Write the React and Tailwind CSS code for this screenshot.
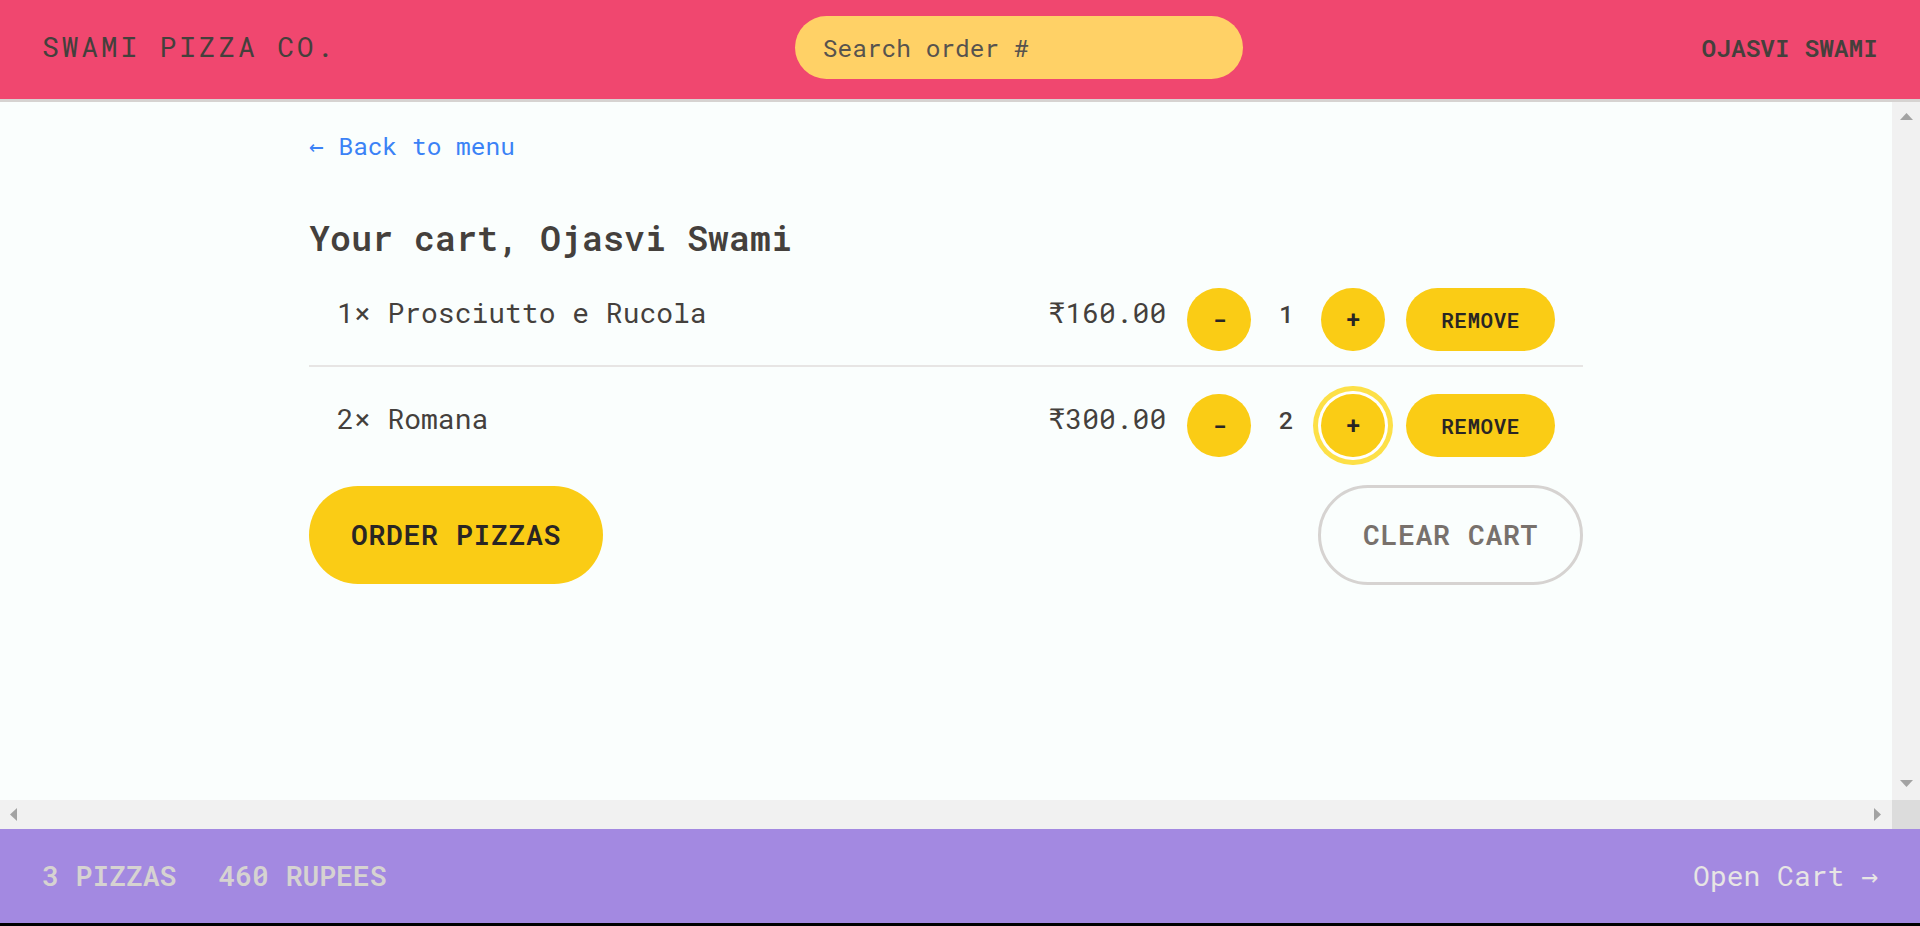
import React from 'react';

const cart = [
  { id: 1, name: 'Prosciutto e Rucola', quantity: 1, totalPrice: 160 },
  { id: 2, name: 'Romana', quantity: 2, totalPrice: 300 },
];

const formatCurrency = (v) => '₹' + v.toFixed(2);

const Arrow = ({ dir }) => {
  const points = {
    up: '0,7 6.5,0 13,7',
    down: '0,0 13,0 6.5,7',
    left: '7,0 7,13 0,6.5',
    right: '0,0 7,6.5 0,13',
  };
  const vertical = dir === 'up' || dir === 'down';
  return (
    <svg width={vertical ? 13 : 7} height={vertical ? 7 : 13} viewBox={vertical ? '0 0 13 7' : '0 0 7 13'}>
      <polygon points={points[dir]} fill="#a3a3a3" />
    </svg>
  );
};

const Header = () => (
  <header className="flex h-[102px] shrink-0 items-center justify-between border-b-[3px] border-[#d6d3d1] bg-[#f0476f] px-[42px] pb-[5px] uppercase">
    <a href="#" className="text-[28px] leading-[42px] tracking-[0.1em] text-[#44403c]">
      Swami Pizza Co.
    </a>
    <input
      placeholder="Search order #"
      className="h-[63px] w-[448px] rounded-full bg-[#ffd166] px-[28px] text-[24.5px] leading-[35px] text-[#44403c] placeholder:text-[#57534e] focus:outline-none"
    />
    <div className="text-[24.5px] font-semibold leading-[35px] text-[#44403c]">Ojasvi Swami</div>
  </header>
);

const RoundButton = ({ children, focused }) => (
  <button
    className={
      focused
        ? 'flex h-[63px] w-[64px] items-center justify-center rounded-full bg-[#facc15] text-[24.5px] font-semibold text-[#292524] ring-[5px] ring-[#fde047] ring-offset-[3px] ring-offset-white'
        : 'flex h-[63px] w-[64px] items-center justify-center rounded-full bg-[#facc15] text-[24.5px] font-semibold text-[#292524]'
    }
  >
    {children}
  </button>
);

const CartItem = ({ item, first }) => (
  <li
    className={
      first
        ? 'flex items-center justify-between px-[28px] py-[14px]'
        : 'flex items-center justify-between border-t-2 border-[#e7e5e4] px-[28px] pt-[27px] pb-[14px]'
    }
  >
    <p className="mb-[13px] text-[28px] leading-[42px] text-[#44403c]">
      {item.quantity}&times; {item.name}
    </p>
    <div className="flex items-center gap-[21px]">
      <p className="mb-[13px] text-[28px] leading-[42px] text-[#44403c]">{formatCurrency(item.totalPrice)}</p>
      <RoundButton>-</RoundButton>
      <span className="mb-[13px] w-[28px] text-center text-[24.5px] font-medium leading-[35px] text-[#44403c]">
        {item.quantity}
      </span>
      <RoundButton focused={!first}>+</RoundButton>
      <button className="h-[63px] rounded-full bg-[#facc15] px-[35px] text-[21px] font-semibold uppercase leading-[28px] tracking-[0.025em] text-[#292524]">
        Remove
      </button>
    </div>
  </li>
);

const Cart = () => (
  <div className="mx-auto w-[1344px] px-[35px] pt-[26px]">
    <a href="#" className="block text-[24.5px] leading-[35px] text-[#3b82f6]">
      &larr; Back to menu
    </a>
    <h2 className="mt-[50px] text-[35px] font-semibold leading-[49px] text-[#44403c]">Your cart, Ojasvi Swami</h2>
    <ul className="mt-[12px]">
      {cart.map((item, i) => (
        <CartItem key={item.id} item={item} first={i === 0} />
      ))}
    </ul>
    <div className="mt-[14px] flex items-center justify-between">
      <button className="h-[98px] rounded-full bg-[#facc15] px-[42px] text-[28px] font-semibold uppercase leading-[42px] tracking-[0.025em] text-[#292524]">
        Order pizzas
      </button>
      <button className="h-[100px] rounded-full border-[3.5px] border-[#d6d3d1] px-[42px] text-[28px] font-semibold uppercase leading-[42px] tracking-[0.025em] text-[#78716c]">
        Clear cart
      </button>
    </div>
  </div>
);

const CartOverview = () => (
  <div className="flex h-[94px] shrink-0 items-center justify-between bg-[#a389e1] px-[42px] text-[28px] leading-[42px]">
    <p className="flex gap-[42px] font-semibold uppercase text-[#d6d3d1]">
      <span>3 pizzas</span>
      <span>460 Rupees</span>
    </p>
    <a href="#" className="text-[#e7e5e4]">
      Open Cart &rarr;
    </a>
  </div>
);

export default function App() {
  return (
    <div className="flex h-screen flex-col overflow-hidden bg-[#fafefd] font-['Roboto_Mono','DejaVu_Sans_Mono',monospace]">
      <Header />
      <div className="grid min-h-0 flex-1 grid-cols-[1fr_28px] grid-rows-[1fr_29px]">
        <div className="min-h-0 overflow-hidden">
          <Cart />
        </div>
        <div className="flex flex-col items-center justify-between bg-[#f1f1f1] pt-[11px] pb-[13px]">
          <Arrow dir="up" />
          <Arrow dir="down" />
        </div>
        <div className="flex items-center justify-between bg-[#f1f1f1] pl-[10px] pr-[11px]">
          <Arrow dir="left" />
          <Arrow dir="right" />
        </div>
        <div className="bg-[#dcdcdc]" />
      </div>
      <CartOverview />
      <div className="h-[3px] shrink-0 bg-black" />
    </div>
  );
}
